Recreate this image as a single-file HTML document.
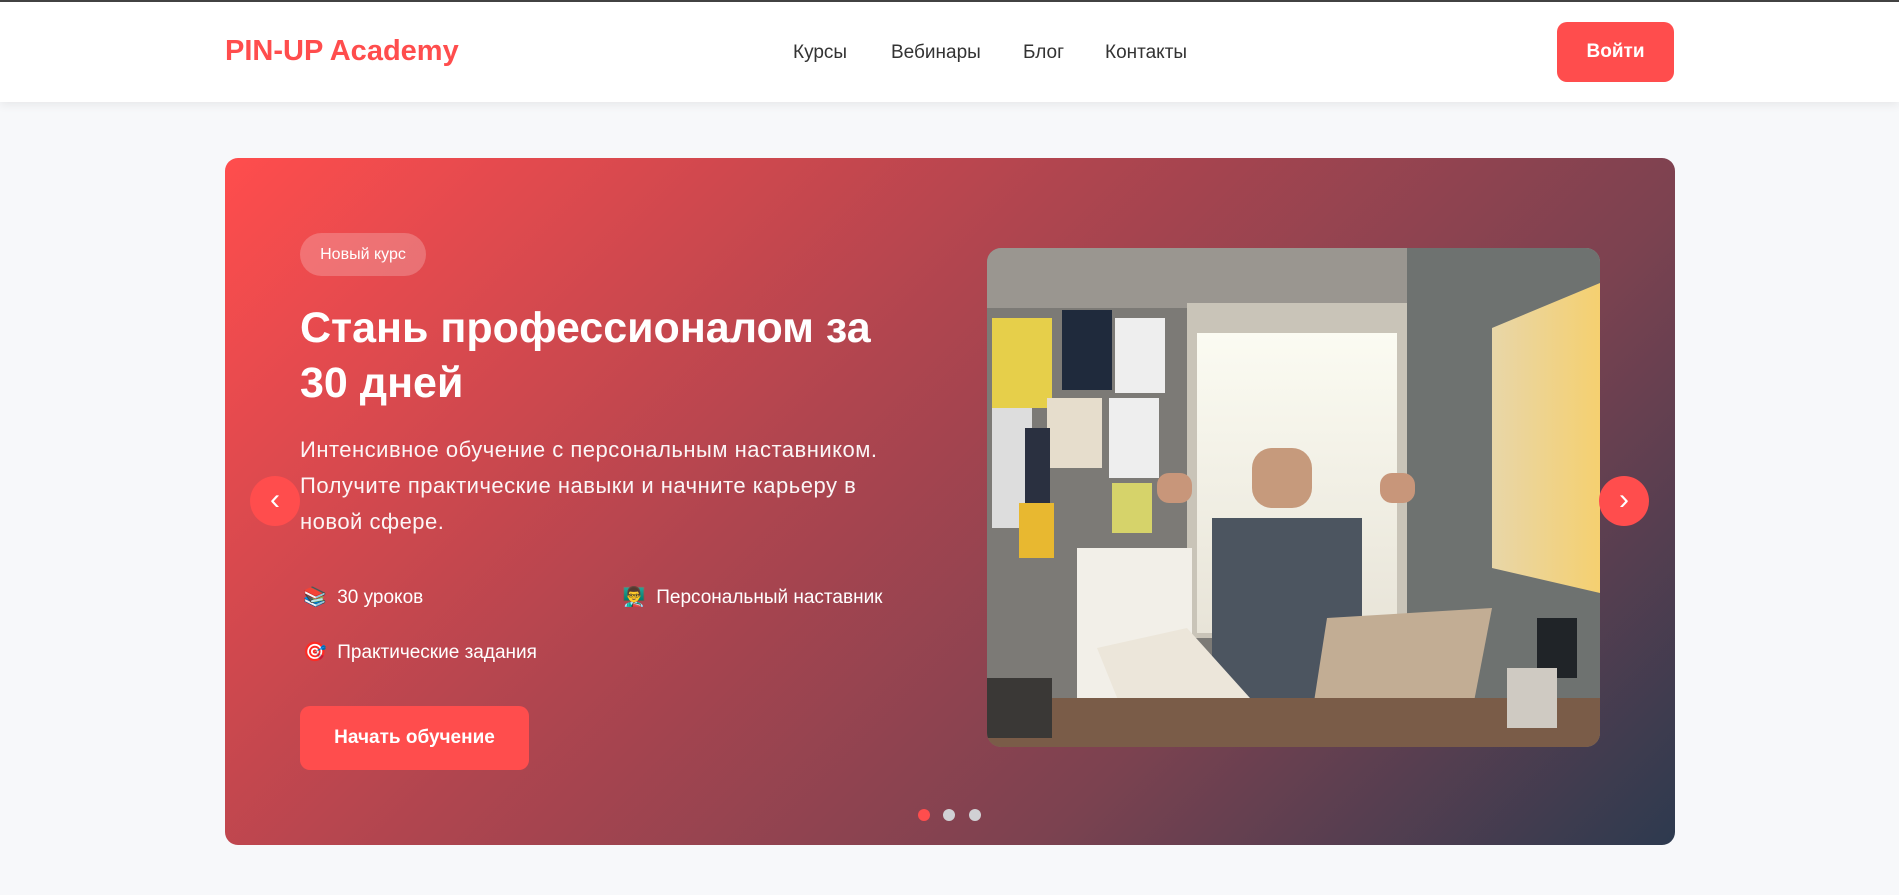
<!DOCTYPE html>
<html><head><meta charset="utf-8"><style>
*{margin:0;padding:0;box-sizing:border-box}
body{width:1899px;height:895px;background:#f7f8fa;font-family:"Liberation Sans","Noto Sans CJK SC",sans-serif;position:relative;overflow:hidden;border-top:2px solid #444}
header{position:absolute;top:0;left:0;width:1899px;height:100px;background:#fff;box-shadow:0 2px 10px rgba(0,0,0,.08)}
.logo{position:absolute;left:225px;top:33px;font-size:29px;font-weight:bold;color:#ff4d4d}
nav a{position:absolute;top:40px;font-size:19px;color:#333;text-decoration:none}
.login{position:absolute;left:1557px;top:20px;width:117px;height:60px;border-radius:10px;background:#ff4d4d;color:#fff;font-weight:bold;font-size:19px;text-align:center;line-height:60px}
.card{position:absolute;left:225px;top:156px;width:1450px;height:687px;border-radius:13px;background:linear-gradient(135deg,#ff4d4d 0%,#b0454f 40%,#7c4250 70%,#2d3a4f 100%)}
.badge{position:absolute;left:300px;top:231px;width:126px;height:43px;border-radius:22px;background:rgba(255,255,255,.22);color:#fff;font-size:16px;text-align:center;line-height:43px}
h1{position:absolute;left:300px;top:299px;color:#fff;font-size:43px;line-height:55px;font-weight:bold}
p{position:absolute;left:300px;top:430px;color:#fff;font-size:22px;letter-spacing:.5px;line-height:36px;opacity:.95}
.f{position:absolute;color:#fff;font-size:19px}
.btn{position:absolute;left:300px;top:704px;width:229px;height:64px;border-radius:10px;background:#ff4d4d;color:#fff;font-weight:bold;font-size:19px;text-align:center;line-height:64px}
.dot{position:absolute;top:807px;width:12px;height:12px;border-radius:50%;background:#d0d0d4}
.arr{position:absolute;top:474px;width:50px;height:50px;border-radius:50%;background:#ff4d4d;color:#fff;font-size:30px;text-align:center;line-height:48px}
.img{position:absolute;left:987px;top:246px;width:613px;height:499px;border-radius:14px;overflow:hidden}
</style></head><body>
<header>
<div class="logo">PIN-UP Academy</div>
<nav><a style="left:793px">Курсы</a><a style="left:891px">Вебинары</a><a style="left:1023px">Блог</a><a style="left:1105px">Контакты</a></nav>
<div class="login">Войти</div>
</header>
<div class="card"></div>
<div class="badge">Новый курс</div>
<h1>Стань профессионалом за<br>30 дней</h1>
<p>Интенсивное обучение с персональным наставником.<br>Получите практические навыки и начните карьеру в<br>новой сфере.</p>
<div class="f" style="left:303px;top:583px">📚&nbsp; 30 уроков</div>
<div class="f" style="left:622px;top:583px">👨‍🏫&nbsp; Персональный наставник</div>
<div class="f" style="left:303px;top:638px">🎯&nbsp; Практические задания</div>
<div class="btn">Начать обучение</div>
<div class="img"><svg width="613" height="499" viewBox="0 0 613 499">
<defs><linearGradient id="w" x1="0" y1="0" x2="0" y2="1"><stop offset="0" stop-color="#fbfbf2"/><stop offset="1" stop-color="#e8e4d8"/></linearGradient>
<linearGradient id="r" x1="0" y1="0" x2="1" y2="0"><stop offset="0" stop-color="#e8d6a8"/><stop offset="1" stop-color="#f5d070"/></linearGradient></defs>
<rect width="613" height="499" fill="#7c7a76"/>
<rect x="0" y="0" width="613" height="60" fill="#9a9690"/>
<rect x="200" y="55" width="220" height="335" fill="#c9c4b8"/>
<rect x="210" y="85" width="200" height="300" fill="url(#w)"/>
<rect x="420" y="0" width="193" height="499" fill="#6e7270"/>
<polygon points="505,80 613,35 613,345 505,320" fill="url(#r)"/>
<rect x="5" y="70" width="60" height="90" fill="#e6cf4a"/><rect x="75" y="62" width="50" height="80" fill="#1f2a3c"/><rect x="128" y="70" width="50" height="75" fill="#eee"/>
<rect x="60" y="150" width="55" height="70" fill="#e6ddcc"/><rect x="122" y="150" width="50" height="80" fill="#eee"/><rect x="125" y="235" width="40" height="50" fill="#d6d36a"/>
<rect x="5" y="160" width="40" height="120" fill="#ddd"/><rect x="38" y="180" width="25" height="80" fill="#2a3040"/><rect x="32" y="255" width="35" height="55" fill="#e8b830"/>
<rect x="90" y="300" width="115" height="150" fill="#f2efe8"/>
<rect x="265" y="200" width="60" height="60" fill="#c69a7c" rx="20"/>
<rect x="225" y="270" width="150" height="190" fill="#4c5560"/>
<rect x="170" y="225" width="35" height="30" fill="#c8967a" rx="12"/><rect x="393" y="225" width="35" height="30" fill="#c8967a" rx="12"/>
<polygon points="340,370 505,360 480,490 320,499" fill="#c2ad94"/>
<polygon points="110,400 200,380 290,480 230,499 150,499" fill="#ece6da"/>
<rect x="0" y="450" width="613" height="49" fill="#7a5c48"/>
<rect x="550" y="370" width="40" height="60" fill="#202428"/><rect x="520" y="420" width="50" height="60" fill="#cfcac2"/>
<rect x="0" y="430" width="65" height="60" fill="#3a3836"/>
</svg></div>
<div class="arr" style="left:250px">‹</div>
<div class="arr" style="left:1599px">›</div>
<div class="dot" style="left:918px;background:#ff4d4d"></div>
<div class="dot" style="left:943px"></div>
<div class="dot" style="left:969px"></div>
</body></html>
